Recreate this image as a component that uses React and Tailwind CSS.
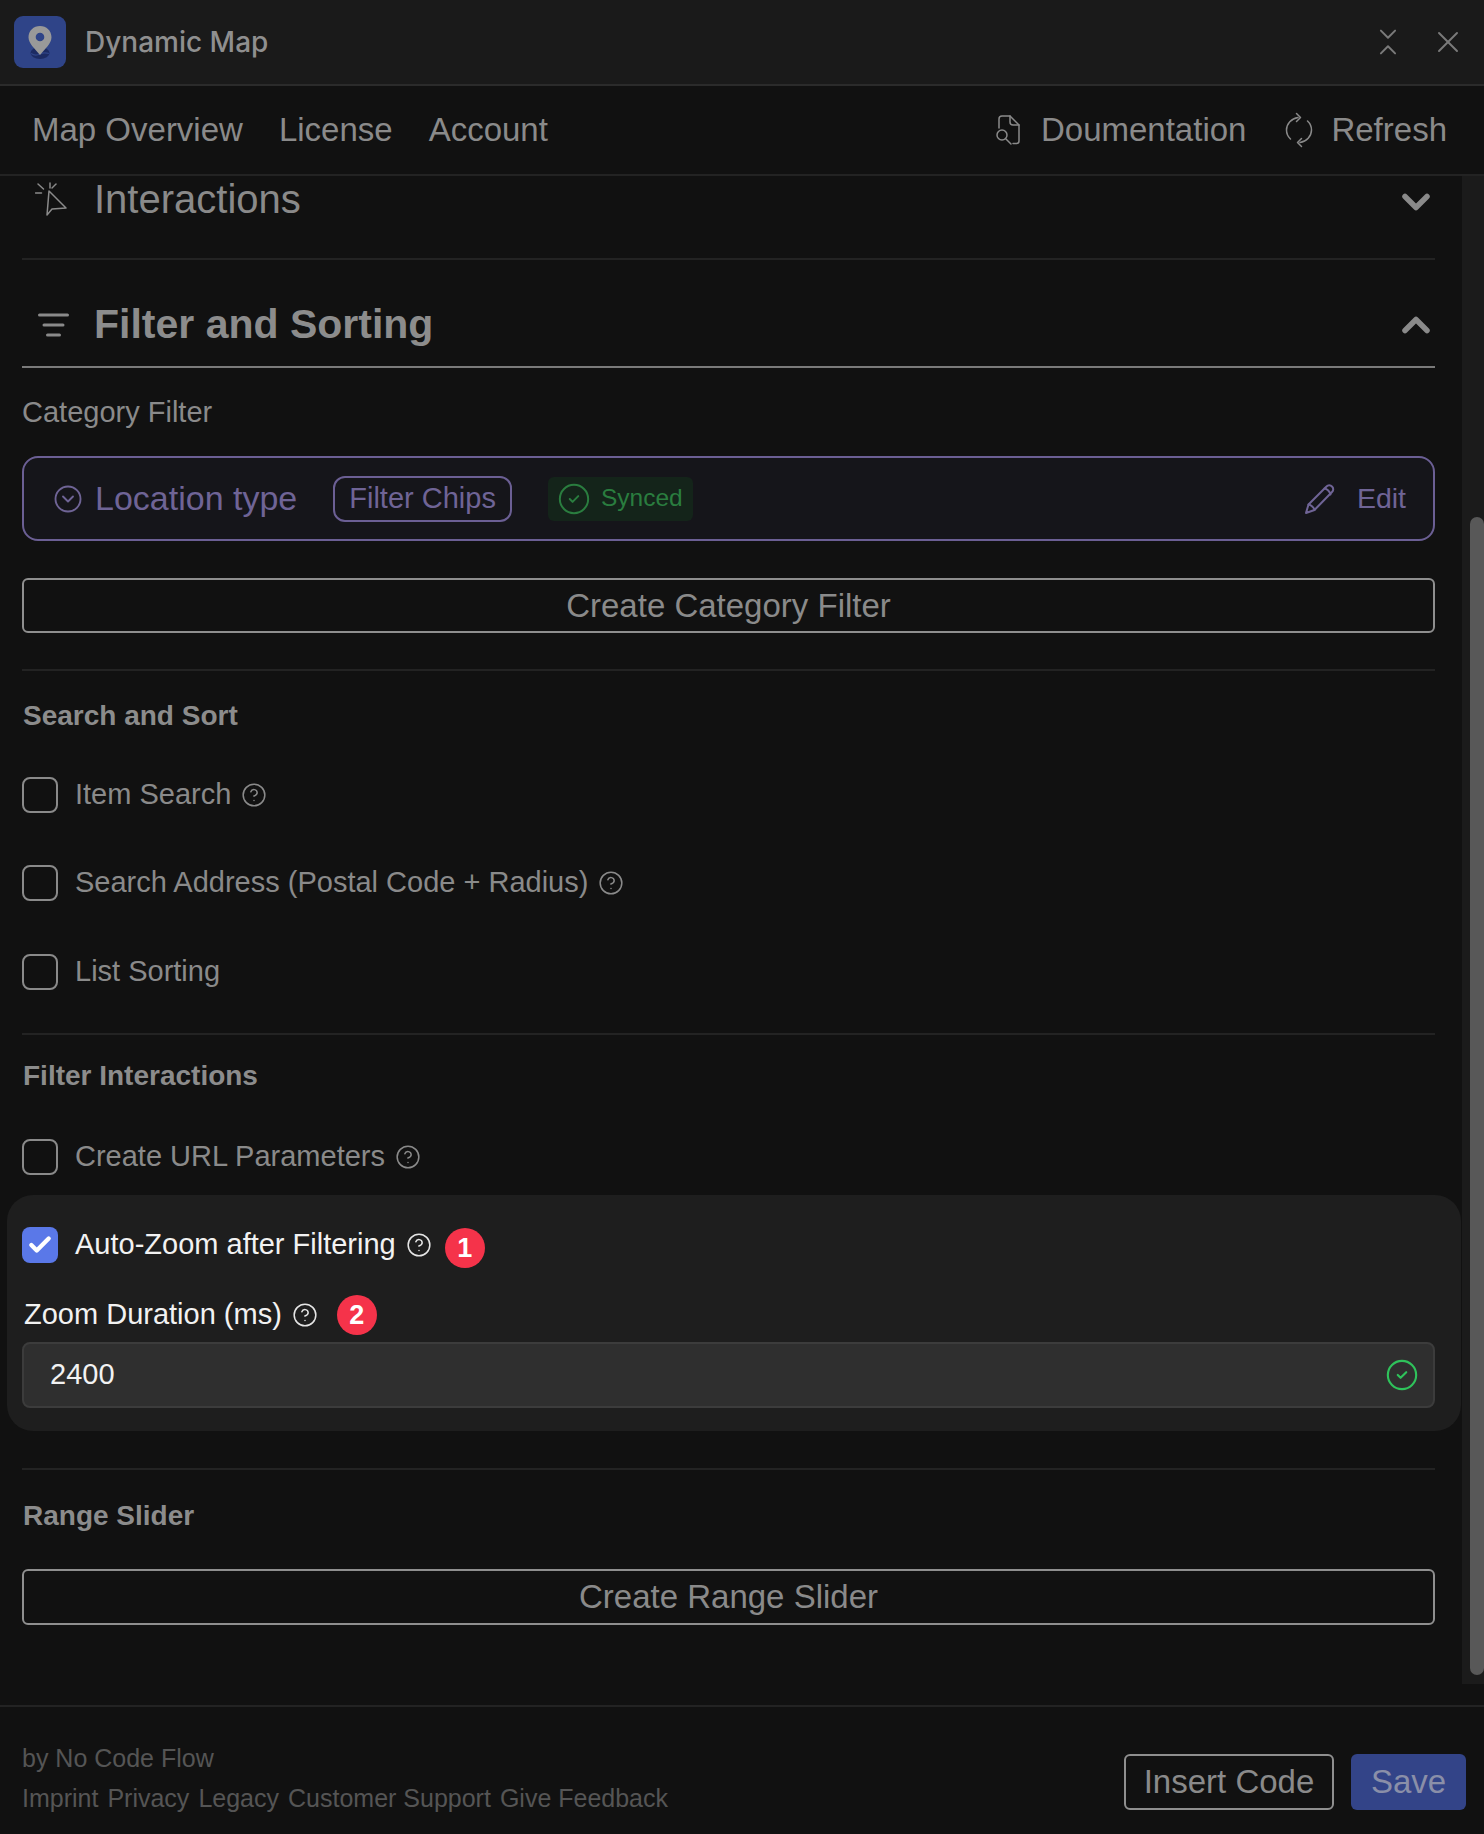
import React from "react";
import {
  X,
  Check,
  ChevronDown,
  ChevronUp,
  ChevronsDownUp,
  CircleCheck,
  CircleChevronDown,
  CircleHelp,
} from "lucide-react";

const NavLinks = ["Map Overview", "License", "Account"];
const FooterLinks = ["Imprint", "Privacy", "Legacy", "Customer Support", "Give Feedback"];

const Divider = ({ className }) => <div className={`h-[2px] bg-[#232323] ${className}`} />;

const Logo = () => (
  <div className="h-[52px] w-[52px] shrink-0 overflow-hidden rounded-[9px] bg-[#2f4488]">
    <svg width="52" height="52" viewBox="0 0 52 52">
      <ellipse cx="26" cy="37" rx="9.5" ry="6" fill="#1c2b63" />
      <path d="M17 37.500c3 2 6 2 9 .5s6-1.500 9-.5" fill="none" stroke="#2f4488" strokeWidth="1.200" />
      <path
        d="M26 10c-6.400 0-11.500 4.800-11.500 11.200 0 6 6.500 11.800 11.500 17.800 5-6 11.500-11.800 11.500-17.800C37.500 14.800 32.400 10 26 10z"
        fill="#999999"
      />
      <circle cx="26" cy="21" r="4.300" fill="#2f4488" />
    </svg>
  </div>
);

const ClickIcon = () => (
  <svg width="32" height="34" viewBox="0 0 32 34" fill="none" stroke="#8a8a8a" strokeWidth="1.500" strokeLinecap="round" strokeLinejoin="round">
    <path d="M14 9l17 17-14 1-5 6z" />
    <path d="M3 2l5.500 5" />
    <path d="M15 1v5" />
    <path d="M21 2l-4 4" />
    <path d="M.5 11h6" />
  </svg>
);

const FilterIcon = () => (
  <svg width="31" height="24" viewBox="0 0 31 24" fill="none" stroke="#8a8a8a" strokeWidth="3" strokeLinecap="round">
    <path d="M1.500 2h28" />
    <path d="M6 12h19" />
    <path d="M9.500 22h12" />
  </svg>
);

const DocSearchIcon = () => (
  <svg width="28" height="34" viewBox="0 0 28 34" fill="none" stroke="#8a8a8a" strokeWidth="1.500" strokeLinecap="round" strokeLinejoin="round">
    <path d="M5 15V6a3 3 0 0 1 3-3h8l9 9v16a2.500 2.500 0 0 1-2.500 2.500H19" />
    <path d="M16 3v6a3 3 0 0 0 3 3h6" />
    <circle cx="8" cy="22" r="5" />
    <path d="M12 26l5 5" />
  </svg>
);

const RefreshIcon = () => (
  <svg width="30" height="36" viewBox="0 0 30 36" fill="none" stroke="#8a8a8a" strokeWidth="1.500" strokeLinecap="round" strokeLinejoin="round">
    <path d="M14 5.500C7.500 6.500 2.500 11.800 2.500 18c0 3.500 1.500 6.700 4 9" />
    <path d="M12.500 1.500l4 4-4 4" />
    <path d="M16 30.500c6.500-1 11.500-6.300 11.500-12.500 0-3.500-1.500-6.700-4-9" />
    <path d="M17.500 34.500l-4-4 4-4" />
  </svg>
);

const PencilIcon = () => (
  <svg width="32" height="32" viewBox="0 0 32 32" fill="none" stroke="#6f6496" strokeWidth="2" strokeLinejoin="round" strokeLinecap="round">
    <path d="M2 30l2.500-8.500L22.500 3.500a3.700 3.700 0 0 1 5.500 0 3.700 3.700 0 0 1 0 5.500L10.500 27z" />
    <path d="M20.500 5.500c2.500.2 5.500 3 6 6" />
    <path d="M4.500 21.500c2.500.5 5.500 3 6 5.500" />
  </svg>
);

const HelpIcon = ({ className = "text-[#8a8a8a]" }) => (
  <CircleHelp size={26} strokeWidth={1.4} className={`ml-[10px] shrink-0 ${className}`} />
);

const Badge = ({ children, className }) => (
  <span className={`flex h-[40px] w-[40px] shrink-0 items-center justify-center rounded-full bg-[#f5334a] text-[27px] font-bold text-white ${className}`}>
    {children}
  </span>
);

const CheckRow = ({ label, help, className }) => (
  <div className={`flex h-[36px] items-center ${className}`}>
    <span className="h-[36px] w-[36px] shrink-0 rounded-lg border-2 border-[#8a8a8a]" />
    <span className="ml-[17px] text-[29px] text-[#8a8a8a]">{label}</span>
    {help && <HelpIcon />}
  </div>
);

const SectionTitle = ({ children, className }) => (
  <h3 className={`ml-[1px] h-[28px] text-[28px] leading-[28px] font-bold text-[#8c8c8c] ${className}`}>{children}</h3>
);

const OutlineButton = ({ children, className }) => (
  <button className={`flex w-full items-center justify-center rounded-md border-2 border-[#8f8f8f] text-[33px] text-[#8a8a8a] ${className}`}>
    {children}
  </button>
);

export default function App() {
  return (
    <div className="flex h-[1834px] w-[1484px] flex-col overflow-hidden bg-[#111111] font-['Liberation_Sans',Arial,sans-serif]">
      {/* title bar */}
      <header className="flex h-[86px] shrink-0 items-center border-b-2 border-[#2b2b2b] bg-[#1a1a1a] pr-[18px] pl-[14px]">
        <Logo />
        <span className="ml-[19px] font-['Inter',sans-serif] text-[28px] font-medium text-[#8f8f8f]">Dynamic Map</span>
        <ChevronsDownUp size={34} strokeWidth={1.4} className="ml-auto text-[#7a7a7a]" />
        <X size={36} strokeWidth={1.3} className="ml-[25px] text-[#7a7a7a]" />
      </header>

      {/* tabs */}
      <nav className="flex h-[90px] shrink-0 items-center border-b-2 border-[#232323] pr-[37px] pl-[32px] text-[33px] text-[#8a8a8a]">
        {NavLinks.map((link) => (
          <a key={link} href="#" className="mr-[36px]">
            {link}
          </a>
        ))}
        <span className="ml-auto">
          <DocSearchIcon />
        </span>
        <span className="ml-[19px]">Doumentation</span>
        <span className="ml-[38px]">
          <RefreshIcon />
        </span>
        <span className="ml-[17px]">Refresh</span>
      </nav>

      <div className="flex min-h-0 flex-1">
        <main className="w-[1462px] shrink-0 overflow-hidden pr-[27px] pl-[22px]">
          {/* collapsed section, scrolled partly out of view */}
          <div className="flex h-[46px] items-center">
            <span className="ml-[13px]">
              <ClickIcon />
            </span>
            <span className="ml-[27px] text-[40px] leading-[46px] text-[#8a8a8a]">Interactions</span>
            <ChevronDown size={44} strokeWidth={3} className="relative top-[3px] -mr-[3px] ml-auto text-[#8a8a8a]" />
          </div>
          <Divider className="mt-[36px]" />

          {/* open section */}
          <div className="mt-[43px] flex h-[44px] items-center">
            <span className="ml-[16px]">
              <FilterIcon />
            </span>
            <span className="ml-[25px] text-[41px] font-bold text-[#8c8c8c]">Filter and Sorting</span>
            <ChevronUp size={44} strokeWidth={3} className="-mr-[3px] ml-auto text-[#8a8a8a]" />
          </div>
          <div className="mt-[19px] h-[2px] bg-[#7a7a7a]" />

          <p className="mt-[30px] h-[28px] text-[29px] leading-[28px] text-[#8a8a8a]">Category Filter</p>

          <div className="mt-[30px] flex h-[85px] items-center rounded-2xl border-2 border-[#6b5f94] bg-[#15151a] pr-[27px] pl-[29px] text-[#6f6496]">
            <CircleChevronDown size={30} strokeWidth={1.5} />
            <span className="ml-[12px] text-[34px]">Location type</span>
            <span className="ml-[36px] flex h-[46px] items-center rounded-xl border-2 border-[#6b5f94] px-[14px] text-[29px]">
              Filter Chips
            </span>
            <span className="ml-[36px] flex h-[44px] items-center rounded-md bg-[#14241a] pr-[10px] pl-[9px] text-[24.5px] text-[#2a7d3f]">
              <CircleCheck size={34} strokeWidth={1.4} />
              <span className="ml-[10px]">Synced</span>
            </span>
            <span className="ml-auto">
              <PencilIcon />
            </span>
            <span className="ml-[21px] text-[28.5px]">Edit</span>
          </div>

          <OutlineButton className="mt-[37px] h-[55px]">Create Category Filter</OutlineButton>

          <Divider className="mt-[36px]" />
          <SectionTitle className="mt-[31px]">Search and Sort</SectionTitle>
          <CheckRow label="Item Search" help className="mt-[47px]" />
          <CheckRow label="Search Address (Postal Code + Radius)" help className="mt-[52px]" />
          <CheckRow label="List Sorting" className="mt-[53px]" />

          <Divider className="mt-[43px]" />
          <SectionTitle className="mt-[27px]">Filter Interactions</SectionTitle>
          <CheckRow label="Create URL Parameters" help className="mt-[49px]" />

          {/* highlighted block */}
          <div className="mt-[20px] -mr-[26px] -ml-[15px] h-[236px] rounded-[26px] bg-[#1e1e1e] pt-[32px] pr-[26px] pl-[15px]">
            <div className="flex h-[36px] items-center">
              <span className="flex h-[36px] w-[36px] shrink-0 items-center justify-center rounded-lg bg-[#5a78e8]">
                <Check size={26} strokeWidth={4} className="text-white" />
              </span>
              <span className="ml-[17px] text-[29px] text-[#f2f2f2]">Auto-Zoom after Filtering</span>
              <HelpIcon className="text-[#e5e5e5]" />
              <Badge className="relative top-[3px] ml-[13px]">1</Badge>
            </div>
            <div className="mt-[32px] flex h-[40px] items-center pl-[2px]">
              <span className="text-[29px] text-[#f2f2f2]">Zoom Duration (ms)</span>
              <HelpIcon className="text-[#e5e5e5]" />
              <Badge className="ml-[19px]">2</Badge>
            </div>
            <div className="mt-[7px] flex h-[66px] items-center rounded-lg border-2 border-[#3c3c3c] bg-[#2f2f2f] pr-[14px] pl-[26px]">
              <span className="text-[29px] text-[#f2f2f2]">2400</span>
              <CircleCheck size={34} strokeWidth={1.5} className="ml-auto text-[#2fc25b]" />
            </div>
          </div>

          <Divider className="mt-[37px]" />
          <SectionTitle className="mt-[32px]">Range Slider</SectionTitle>
          <OutlineButton className="mt-[39px] h-[56px]">Create Range Slider</OutlineButton>
        </main>

        {/* scrollbar */}
        <div className="mb-[21px] w-[22px] shrink-0 bg-[#1b1b1b] pt-[341px]">
          <div className="ml-[8px] h-[1158px] w-[14px] rounded-full bg-[#585858]" />
        </div>
      </div>

      <footer className="flex h-[129px] shrink-0 items-start border-t-2 border-[#232323] pt-[31px] pr-[18px] pl-[22px]">
        <div className="text-[25px] text-[#555555]">
          <p className="h-[40px] leading-[40px]">by No Code Flow</p>
          <div className="flex gap-[9px] leading-[40px]">
            {FooterLinks.map((link) => (
              <a key={link} href="#">
                {link}
              </a>
            ))}
          </div>
        </div>
        <button className="mt-[16px] ml-auto flex h-[56px] w-[210px] items-center justify-center rounded-md border-2 border-[#8f8f8f] text-[33px] text-[#8a8a8a]">
          Insert Code
        </button>
        <button className="mt-[16px] ml-[17px] flex h-[56px] w-[115px] items-center justify-center rounded-md bg-[#334488] text-[33px] text-[#8a8fa8]">
          Save
        </button>
      </footer>
    </div>
  );
}
